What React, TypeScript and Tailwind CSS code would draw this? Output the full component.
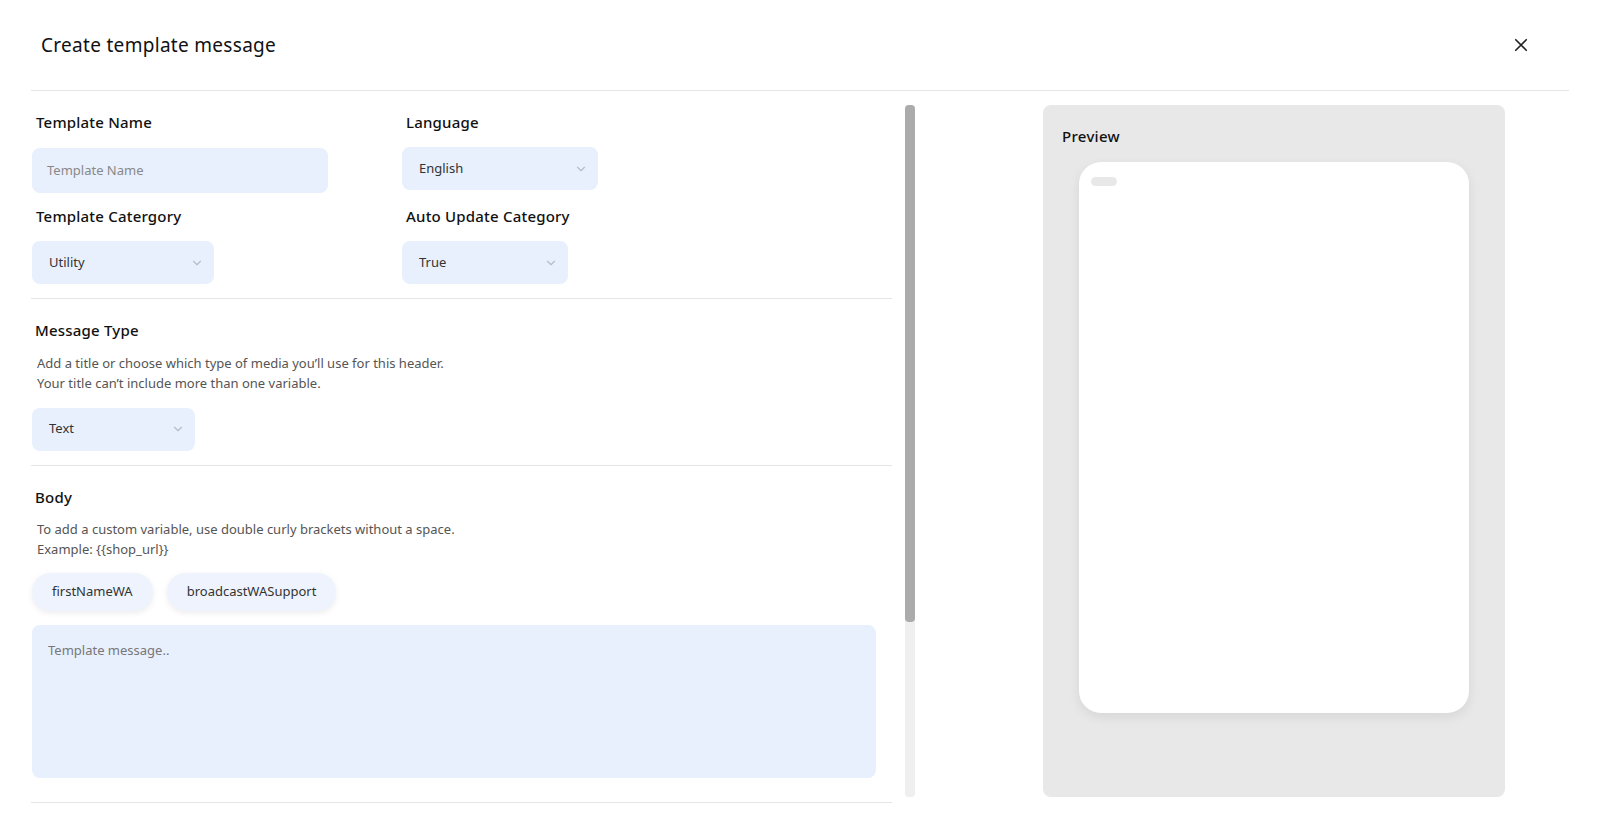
import React from "react";

const Chev = () => (
  <svg width="14" height="14" viewBox="0 0 24 24" fill="none" stroke="#b8bcc4" strokeWidth="2" strokeLinecap="round" strokeLinejoin="round"><path d="M6 9l6 6 6-6" /></svg>
);

const Select = ({ v, w, h = "h-[43px]" }: { v: string; w: string; h?: string }) => (
  <div className={`${w} ${h} bg-[#e8f0fe] rounded-lg flex items-center justify-between pl-[17px] pr-[10px] text-[13px] text-[#333] font-['Noto_Sans',sans-serif]`}>
    <span>{v}</span>
    <Chev />
  </div>
);

const Label = ({ t }: { t: string }) => (
  <div className="text-[15px] text-[#111] font-['Roboto',sans-serif] font-medium tracking-[0.2px]">{t}</div>
);

export default function App() {
  return (
    <div className="w-[1600px] h-[829px] bg-white overflow-hidden font-['Roboto',sans-serif]">
      <div className="flex items-center justify-between pl-[41px] pr-[70px] h-[90px]">
        <div className="text-[19px] text-[#111] tracking-[0.3px]">Create template message</div>
        <svg width="18" height="18" viewBox="0 0 24 24" fill="none" stroke="#222" strokeWidth="2.2" strokeLinecap="round"><path d="M5 5l14 14M19 5L5 19" /></svg>
      </div>
      <div className="mx-[31px] border-t border-[#e5e5e5]" />
      <div className="flex pl-[31px] pt-[14px]">
        <div className="w-[861px]">
          <div className="grid grid-cols-[370px_1fr] pl-[1px]">
            <div className="pl-[4px] pt-[6px] h-[29px]"><Label t="Template Name" /></div>
            <div className="pl-[4px] pt-[6px]"><Label t="Language" /></div>
            <div className="pt-[14px]"><div className="w-[296px] h-[45px] bg-[#e8f0fe] rounded-lg flex items-center pl-[15px] text-[13px] text-[#888] font-['Noto_Sans',sans-serif]">Template Name</div></div>
            <div className="pt-[13px]"><Select v="English" w="w-[196px]" /></div>
            <div className="pl-[4px] pt-[12px] h-[48px]"><Label t="Template Catergory" /></div>
            <div className="pl-[4px] pt-[12px]"><Label t="Auto Update Category" /></div>
            <div><Select v="Utility" w="w-[182px]" /></div>
            <div><Select v="True" w="w-[166px]" /></div>
          </div>
          <div className="mt-[14px] border-t border-[#e5e5e5]" />
          <div className="pl-[4px] pt-[20px]"><Label t="Message Type" /></div>
          <div className="pl-[6px] mt-[11px] text-[13px] leading-[20px] text-[#555] font-['Noto_Sans',sans-serif]">
            <div>Add a title or choose which type of media you’ll use for this header.</div>
            <div>Your title can’t include more than one variable.</div>
          </div>
          <div className="pl-[1px] mt-[15px]"><Select v="Text" w="w-[163px]" /></div>
          <div className="mt-[14px] border-t border-[#e5e5e5]" />
          <div className="pl-[4px] pt-[20px]"><Label t="Body" /></div>
          <div className="pl-[6px] mt-[11px] text-[13px] leading-[20px] text-[#555] font-['Noto_Sans',sans-serif]">
            <div>To add a custom variable, use double curly brackets without a space.</div>
            <div>Example: {"{{shop_url}}"}</div>
          </div>
          <div className="flex gap-[14px] pl-[1px] mt-[14px]">
            {["firstNameWA", "broadcastWASupport"].map((c) => (
              <div key={c} className="h-[38px] px-[20px] rounded-full bg-[#eef3fd] shadow-[0_2px_6px_rgba(0,0,0,0.08)] flex items-center text-[13px] text-[#333] font-['Noto_Sans',sans-serif]">{c}</div>
            ))}
          </div>
          <div className="ml-[1px] mt-[14px] w-[844px] h-[153px] bg-[#e8f0fe] rounded-lg pl-[16px] pt-[16px] text-[13px] text-[#777] font-['Noto_Sans',sans-serif]">Template message..</div>
          <div className="mt-[24px] border-t border-[#e5e5e5]" />
        </div>
        <div className="ml-[13px] w-[10px] h-[692px] bg-[#efefef] rounded-sm">
          <div className="h-[517px] bg-[#ababab] rounded-sm" />
        </div>
        <div className="ml-[128px] w-[462px] h-[692px] bg-[#e8e8e8] rounded-lg pt-[20px] px-[36px]">
          <div className="-ml-[17px] text-[15px] text-[#111] font-medium tracking-[0.3px]">Preview</div>
          <div className="mt-[14px] h-[551px] bg-white rounded-[22px] shadow-[0_4px_12px_rgba(0,0,0,0.08)] pt-[15px] pl-[12px]">
            <div className="w-[26px] h-[9px] rounded-full bg-[#e8e8e8]" />
          </div>
        </div>
      </div>
    </div>
  );
}
